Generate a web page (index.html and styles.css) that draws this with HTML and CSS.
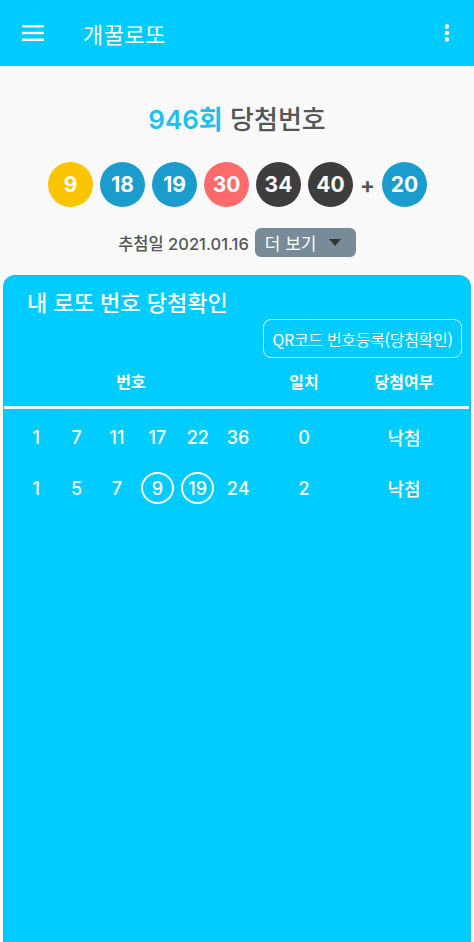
FILE: index.html
```html
<!DOCTYPE html>
<html lang="ko">
<head>
<meta charset="utf-8">
<link rel="stylesheet" href="styles.css">
</head>
<body>
<header class="appbar">
  <svg class="menu" width="22" height="16" viewBox="0 0 22 16"><rect x="0" y="0" width="22" height="2.4" fill="#fff"/><rect x="0" y="6.8" width="22" height="2.4" fill="#fff"/><rect x="0" y="13.6" width="22" height="2.4" fill="#fff"/></svg>
  <div class="apptitle">개꿀로또</div>
  <svg class="more" width="6" height="18" viewBox="0 0 6 18"><circle cx="3" cy="2.5" r="2.2" fill="#fff"/><circle cx="3" cy="9" r="2.2" fill="#fff"/><circle cx="3" cy="15.5" r="2.2" fill="#fff"/></svg>
</header>
<section class="draw">
  <h1 class="draw-title"><span class="round">946회</span> 당첨번호</h1>
  <div class="balls">
    <span class="ball yellow">9</span>
    <span class="ball blue">18</span>
    <span class="ball blue">19</span>
    <span class="ball red">30</span>
    <span class="ball dark">34</span>
    <span class="ball dark">40</span>
    <span class="plus">+</span>
    <span class="ball blue">20</span>
  </div>
  <div class="date-row">
    <span class="date">추첨일 2021.01.16</span>
    <button class="more-btn">더 보기 <svg width="12" height="7" viewBox="0 0 12 7"><path d="M0 0h12L6 7z" fill="#333"/></svg></button>
  </div>
</section>
<section class="card">
  <h2 class="card-title">내 로또 번호 당첨확인</h2>
  <div class="qr-wrap"><button class="qr">QR코드 번호등록(당첨확인)</button></div>
  <div class="grid head">
    <div>번호</div><div>일치</div><div>당첨여부</div>
  </div>
  <div class="divider"></div>
  <div class="grid row">
    <div class="nums"><span>1</span><span>7</span><span>11</span><span>17</span><span>22</span><span>36</span></div>
    <div>0</div><div>낙첨</div>
  </div>
  <div class="grid row">
    <div class="nums"><span>1</span><span>5</span><span>7</span><span class="hit">9</span><span class="hit">19</span><span>24</span></div>
    <div>2</div><div>낙첨</div>
  </div>
</section>
</body>
</html>
```
FILE: styles.css
```css
* { box-sizing: border-box; }
html, body { margin: 0; padding: 0; }
body {
  width: 474px;
  height: 942px;
  overflow: hidden;
  background: #f9f9f9;
  font-family: "Noto Sans CJK KR", "Noto Sans", sans-serif;
  display: flex;
  flex-direction: column;
}
.appbar {
  height: 66px;
  background: #00cbff;
  display: flex;
  align-items: center;
  padding: 0 24px 0 22px;
  flex-shrink: 0;
}
.menu { display: block; }
.apptitle {
  color: #fff;
  font-size: 22px;
  font-weight: 400;
  margin-left: 39px;
  flex: 1;
  letter-spacing: 0.5px;
}
.more { display: block; }
.draw { text-align: center; flex-shrink: 0; }
.draw-title {
  margin: 34px 0 0;
  font-size: 26px;
  line-height: 36px;
  font-weight: 500;
  color: #555;
}
.round {
  color: #1cc0f2;
  font-family: "Inter", "Noto Sans CJK KR", sans-serif;
  font-weight: 600;
}
.balls {
  margin-top: 24px;
  display: flex;
  justify-content: flex-start;
  align-items: center;
  padding-left: 48px;
  gap: 7px;
}
.ball {
  width: 45px;
  height: 45px;
  border-radius: 50%;
  color: #fff;
  font-family: "Inter", "Noto Sans CJK KR", sans-serif;
  font-size: 21px;
  font-weight: 700;
  display: flex;
  align-items: center;
  justify-content: center;
  line-height: 1;
}
.yellow { background: #fbc400; }
.blue { background: #1a9ccd; }
.red { background: #ff6b6b; }
.dark { background: #3d3d3d; }
.plus {
  color: #555;
  font-family: "Inter", sans-serif;
  font-size: 22px;
  font-weight: 700;
  width: 19px;
  text-align: center;
  margin: 0 -2px;
}
.date-row {
  margin-top: 21px;
  display: flex;
  justify-content: center;
  align-items: center;
  gap: 6px;
}
.date {
  font-family: "Inter", "Noto Sans CJK KR", sans-serif;
  font-size: 16.5px;
  color: #555;
  font-weight: 500;
}
.more-btn {
  height: 29px;
  width: 101px;
  background: #778b99;
  border: none;
  border-radius: 6px;
  color: #fff;
  font-family: inherit;
  font-size: 17px;
  display: flex;
  align-items: center;
  justify-content: flex-start;
  gap: 12px;
  padding: 0 0 0 10px;
}
.card {
  margin: 18px 3px 0;
  flex: 1;
  background: #00ccff;
  border: 1px solid #2bb6e2;
  border-bottom: none;
  border-radius: 12px 12px 0 0;
  color: #fff;
}
.card-title {
  margin: 11px 0 0 23px;
  font-size: 22px;
  line-height: 28px;
  font-weight: 500;
}
.qr-wrap { display: flex; justify-content: flex-end; padding-right: 8px; margin-top: 4px; }
.qr {
  height: 39px;
  width: 199px;
  background: transparent;
  border: 1px solid #e6f9ff;
  border-radius: 8px;
  color: #fff;
  font-family: inherit;
  font-size: 16px;
  letter-spacing: -0.3px;
  padding: 0;
}
.grid {
  display: grid;
  grid-template-columns: 254px 92px 108px;
  text-align: center;
}
.head {
  margin-top: 11px;
  font-size: 16px;
  font-weight: 700;
  line-height: 24px;
}
.divider {
  height: 3px;
  background: #e8f8ff;
  margin: 13px 1px 0 0;
}
.row {
  font-family: "Inter", "Noto Sans CJK KR", sans-serif;
  font-size: 18px;
  font-weight: 500;
  height: 34px;
  align-items: center;
}
.divider + .row { margin-top: 11px; }
.row + .row { margin-top: 17px; }
.nums {
  display: grid;
  grid-template-columns: repeat(6, 40.4px);
  padding-left: 12px;
  align-items: center;
  justify-items: center;
}
.nums span { display: flex; align-items: center; justify-content: center; height: 32px; }
.hit {
  width: 33px;
  border: 2px solid #fff;
  border-radius: 50%;
}
```
